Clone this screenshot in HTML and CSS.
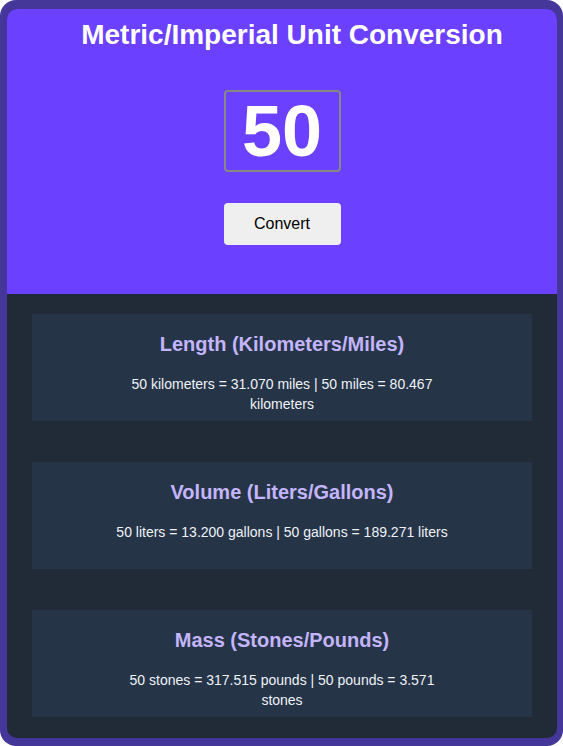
FILE: index.html
```html
<!DOCTYPE html>
<html>
<head>
<meta charset="utf-8">
<link rel="stylesheet" href="styles.css">
</head>
<body>
<div class="frame">
  <div class="app">
    <header class="hero">
      <h1 class="title">Metric/Imperial Unit Conversion</h1>
      <div class="value">50</div>
      <button class="convert">Convert</button>
    </header>
    <main class="results">
      <section class="card">
        <h2 class="card-title">Length (Kilometers/Miles)</h2>
        <p class="card-text">50 kilometers = 31.070 miles | 50 miles = 80.467 kilometers</p>
      </section>
      <section class="card">
        <h2 class="card-title">Volume (Liters/Gallons)</h2>
        <p class="card-text">50 liters = 13.200 gallons | 50 gallons = 189.271 liters</p>
      </section>
      <section class="card">
        <h2 class="card-title">Mass (Stones/Pounds)</h2>
        <p class="card-text">50 stones = 317.515 pounds | 50 pounds = 3.571 stones</p>
      </section>
    </main>
  </div>
</div>
</body>
</html>
```

FILE: styles.css
```css
html, body {
  margin: 0;
  padding: 0;
  background: #ffffff;
}
body {
  font-family: "Liberation Sans", Arial, sans-serif;
}
.frame {
  width: 563px;
  height: 746px;
  box-sizing: border-box;
  background: #453699;
  border-radius: 16px;
  padding: 9px 6px 8px 7px;
}
.app {
  height: 100%;
  border-radius: 10px;
  overflow: hidden;
  display: flex;
  flex-direction: column;
  background: #212a37;
}
.hero {
  background: #6b40ff;
  height: 285px;
  box-sizing: border-box;
  padding-top: 10px;
  display: flex;
  flex-direction: column;
  align-items: center;
}
.title {
  margin: 0 0 0 20px;
  font-size: 28px;
  font-weight: bold;
  color: #ffffff;
  line-height: 32px;
}
.value {
  margin-top: 39px;
  width: 117px;
  height: 82px;
  box-sizing: border-box;
  border: 2px solid #888888;
  border-radius: 4px;
  display: flex;
  align-items: center;
  justify-content: center;
  font-size: 72px;
  font-weight: bold;
  color: #ffffff;
}
.convert {
  margin-top: 31px;
  width: 117px;
  height: 42px;
  border: none;
  border-radius: 4px;
  background: #efefef;
  color: #000000;
  font-family: "Liberation Sans", Arial, sans-serif;
  font-size: 16px;
  padding: 0;
}
.results {
  flex: 1;
  padding: 20px 25px 0 25px;
  display: flex;
  flex-direction: column;
  gap: 41px;
}
.card {
  height: 107px;
  box-sizing: border-box;
  background: #263447;
  padding: 19px 80px 0 80px;
  text-align: center;
}
.card-title {
  margin: 0;
  font-size: 20px;
  line-height: 23px;
  font-weight: bold;
  color: #c4b5fd;
}
.card-text {
  margin: 18px 0 0 0;
  font-size: 14px;
  line-height: 20px;
  color: #eef2f7;
}
```
